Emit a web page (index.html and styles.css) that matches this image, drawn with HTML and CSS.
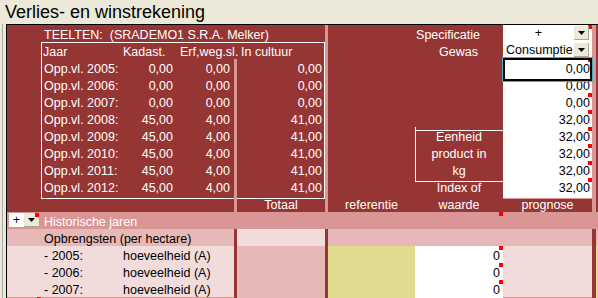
FILE: index.html
```html
<!DOCTYPE html>
<html>
<head>
<meta charset="utf-8">
<title>Verlies- en winstrekening</title>
<link rel="stylesheet" href="styles.css">
</head>
<body>
<div class="title">Verlies- en winstrekening</div>
<div class="main">
  <div class="gutter"></div>
  <div class="sheet">
    <!-- row 1 -->
    <div class="r hd">
      <div></div>
      <div class="sp5 pl3">TEELTEN: &nbsp;(SRADEMO1 S.R.A. Melker)</div>
      <div class="pk"></div>
      <div class="sp2 lab1">Specificatie</div>
      <div class="in dd mk"><span class="ddt c">+</span><span class="btn"><svg width="7" height="4" viewBox="0 0 7 4"><polygon points="0,0 7,0 3.5,4" fill="#000"/></svg></span></div>
      <div class="pk"></div>
      <div></div>
    </div>
    <!-- row 2 -->
    <div class="r hd">
      <div></div>
      <div class="bx-tl pl2">Jaar</div>
      <div class="bx-t pl3">Kadast.</div>
      <div class="bx-t pl3">Erf,weg.sl.</div>
      <div class="bx-t"></div>
      <div class="bx-tr pl4">In cultuur</div>
      <div class="pk"></div>
      <div class="sp2 lab2">Gewas</div>
      <div class="in dd"><span class="ddt pl3">Consumptie</span><span class="btn"><svg width="7" height="4" viewBox="0 0 7 4"><polygon points="0,0 7,0 3.5,4" fill="#000"/></svg></span></div>
      <div class="pk"></div>
      <div></div>
    </div>
    <!-- row 3 -->
    <div class="r hd">
      <div></div>
      <div class="bx-l pl3">Opp.vl. 2005:</div>
      <div class="n">0,00</div>
      <div class="n">0,00</div>
      <div class="pk"></div>
      <div class="bx-r n3">0,00</div>
      <div class="pk"></div>
      <div></div>
      <div></div>
      <div class="in sel mk n2">0,00</div>
      <div class="pk"></div>
      <div></div>
    </div>
    <!-- row 4 -->
    <div class="r hd">
      <div></div>
      <div class="bx-l pl3">Opp.vl. 2006:</div>
      <div class="n">0,00</div>
      <div class="n">0,00</div>
      <div class="pk"></div>
      <div class="bx-r n3">0,00</div>
      <div class="pk"></div>
      <div></div>
      <div></div>
      <div class="in mk n2">0,00</div>
      <div class="pk"></div>
      <div></div>
    </div>
    <!-- row 5 -->
    <div class="r hd">
      <div></div>
      <div class="bx-l pl3">Opp.vl. 2007:</div>
      <div class="n">0,00</div>
      <div class="n">0,00</div>
      <div class="pk"></div>
      <div class="bx-r n3">0,00</div>
      <div class="pk"></div>
      <div></div>
      <div></div>
      <div class="in mk n2">0,00</div>
      <div class="pk"></div>
      <div></div>
    </div>
    <!-- row 6 -->
    <div class="r hd">
      <div></div>
      <div class="bx-l pl3">Opp.vl. 2008:</div>
      <div class="n">45,00</div>
      <div class="n">4,00</div>
      <div class="pk"></div>
      <div class="bx-r n3">41,00</div>
      <div class="pk"></div>
      <div></div>
      <div class="eb-b"></div>
      <div class="in mk n2">32,00</div>
      <div class="pk"></div>
      <div></div>
    </div>
    <!-- row 7 -->
    <div class="r hd">
      <div></div>
      <div class="bx-l pl3">Opp.vl. 2009:</div>
      <div class="n">45,00</div>
      <div class="n">4,00</div>
      <div class="pk"></div>
      <div class="bx-r n3">41,00</div>
      <div class="pk"></div>
      <div></div>
      <div class="eb-l c">Eenheid</div>
      <div class="in mk n2">32,00</div>
      <div class="pk"></div>
      <div></div>
    </div>
    <!-- row 8 -->
    <div class="r hd">
      <div></div>
      <div class="bx-l pl3">Opp.vl. 2010:</div>
      <div class="n">45,00</div>
      <div class="n">4,00</div>
      <div class="pk"></div>
      <div class="bx-r n3">41,00</div>
      <div class="pk"></div>
      <div></div>
      <div class="eb-l c">product in</div>
      <div class="in mk n2">32,00</div>
      <div class="pk"></div>
      <div></div>
    </div>
    <!-- row 9 -->
    <div class="r hd">
      <div></div>
      <div class="bx-l pl3">Opp.vl. 2011:</div>
      <div class="n">45,00</div>
      <div class="n">4,00</div>
      <div class="pk"></div>
      <div class="bx-r n3">41,00</div>
      <div class="pk"></div>
      <div></div>
      <div class="eb-bl c">kg</div>
      <div class="in mk n2">32,00</div>
      <div class="pk"></div>
      <div></div>
    </div>
    <!-- row 10 -->
    <div class="r hd">
      <div></div>
      <div class="bx-bl pl3">Opp.vl. 2012:</div>
      <div class="bx-b n">45,00</div>
      <div class="bx-b n">4,00</div>
      <div class="pk-b"></div>
      <div class="bx-br n3">41,00</div>
      <div class="pk"></div>
      <div></div>
      <div class="c">Index of</div>
      <div class="in mk n2">32,00</div>
      <div class="pk"></div>
      <div></div>
    </div>
    <!-- row 11 -->
    <div class="r hd">
      <div class="sp4"></div>
      <div class="pk"></div>
      <div class="c">Totaal</div>
      <div class="pk"></div>
      <div class="c">referentie</div>
      <div class="c">waarde</div>
      <div class="c">prognose</div>
      <div class="pk"></div>
      <div></div>
    </div>
    <!-- row 12 -->
    <div class="r hist">
      <div class="dd2"><span class="w">+</span><span class="btn2 mk"><svg width="7" height="4" viewBox="0 0 7 4"><polygon points="0,0 7,0 3.5,4" fill="#000"/></svg></span></div>
      <div class="sp7 pl3">Historische jaren</div>
      <div class="mk"></div>
      <div class="sp3"></div>
    </div>
    <!-- row 13 -->
    <div class="r lt2">
      <div></div>
      <div class="sp3 pl3">Opbrengsten (per hectare)</div>
      <div class="dk"></div>
      <div class="lt3"></div>
      <div class="dk"></div>
      <div class="sp3"></div>
      <div class="dk"></div>
      <div></div>
    </div>
    <!-- row 14 -->
    <div class="r lt3">
      <div></div>
      <div class="pl3">- 2005:</div>
      <div class="sp2 pl3">hoeveelheid (A)</div>
      <div class="dk"></div>
      <div class="lt2"></div>
      <div class="dk"></div>
      <div class="ye"></div>
      <div class="in mk n3">0</div>
      <div></div>
      <div class="dk"></div>
      <div class="ye"></div>
    </div>
    <!-- row 15 -->
    <div class="r lt3">
      <div></div>
      <div class="pl3">- 2006:</div>
      <div class="sp2 pl3">hoeveelheid (A)</div>
      <div class="dk"></div>
      <div class="lt2"></div>
      <div class="dk"></div>
      <div class="ye"></div>
      <div class="in mk n3">0</div>
      <div></div>
      <div class="dk"></div>
      <div class="ye"></div>
    </div>
    <!-- row 16 -->
    <div class="r lt3">
      <div></div>
      <div class="pl3">- 2007:</div>
      <div class="sp2 pl3">hoeveelheid (A)</div>
      <div class="dk"></div>
      <div class="lt2"></div>
      <div class="dk"></div>
      <div class="ye"></div>
      <div class="in mk n3">0</div>
      <div></div>
      <div class="dk"></div>
      <div class="ye"></div>
    </div>
    <!-- row 17 (only its top edge is visible) -->
    <div class="r hist last">
      <div class="mk"></div>
      <div class="sp11"></div>
    </div>
  </div>
</div>
</body>
</html>
```

FILE: styles.css
```css
html, body {
  margin: 0;
  padding: 0;
  overflow: hidden;
}
body {
  width: 598px;
  height: 298px;
  background: #ECE9D8;
  font-family: "Liberation Sans", Arial, sans-serif;
  font-size: 12.5px;
  color: #000;
}
.title {
  height: 24px;
  padding-left: 5px;
  font-size: 18px;
  line-height: 24px;
}
.main {
  display: flex;
}
.gutter {
  width: 6px;
  flex: none;
  background: linear-gradient(to right, transparent 2px, #a9a9a9 2px, #a9a9a9 3px, transparent 3px);
}
.sheet {
  width: 591px;
  border-left: 1px solid #000;
  border-top: 1px solid #000;
}
.r {
  display: grid;
  grid-template-columns: 34px 79px 57px 57px 3px 88px 3px 87px 88px 89px 4px 2px;
  height: 17px;
  line-height: 21px;
  white-space: nowrap;
}
.r.last { height: 1px; }
.r > div { min-width: 0; }

.hd { background-color: #963634; color: #fff; }
.hist { background-color: #DA9694; color: #fff; }
.lt2, .r > .lt2 { background-color: #E6B9B8; }
.lt3, .r > .lt3 { background-color: #F2DCDB; }
.pk { background-color: #DA9694; }
.dk { background-color: #963634; }
.ye { background-color: #E0DB8E; }

.sp2 { grid-column: span 2; }
.sp3 { grid-column: span 3; }
.sp4 { grid-column: span 4; }
.sp5 { grid-column: span 5; }
.sp7 { grid-column: span 7; }
.sp11 { grid-column: span 11; }

.pl2 { padding-left: 2px; }
.pl3 { padding-left: 3px; }
.pl4 { padding-left: 4px; }
.c { text-align: center; }
.n { text-align: right; padding-right: 4px; }
.n2 { text-align: right; padding-right: 2px; }
.n3 { text-align: right; padding-right: 3px; }
.lab1 { text-align: right; padding-right: 23px; }
.lab2 { text-align: right; padding-right: 25px; }

/* white frame around the area table */
.bx-t { box-shadow: inset 0 1px 0 #fff; }
.bx-tl { box-shadow: inset 0 1px 0 #fff, inset 1px 0 0 #fff; }
.bx-tr { box-shadow: inset 0 1px 0 #fff, inset -1px 0 0 #fff; }
.bx-l { box-shadow: inset 1px 0 0 #fff; }
.bx-r { box-shadow: inset -1px 0 0 #fff; }
.bx-b { box-shadow: inset 0 -1px 0 #fff; }
.bx-bl { box-shadow: inset 0 -1px 0 #fff, inset 1px 0 0 #fff; }
.bx-br { box-shadow: inset 0 -1px 0 #fff, inset -1px 0 0 #fff; }
.pk-b { background-color: #DA9694; box-shadow: inset 0 -1px 0 #fff; }

/* "Eenheid product in kg" frame */
.eb-b { box-shadow: inset 0 -1px 0 #fff; }
.eb-l { box-shadow: inset 1px 0 0 #fff; }
.eb-bl { box-shadow: inset 1px 0 0 #fff, inset 0 -1px 0 #fff; }

/* input cells */
.in {
  background-color: #fff;
  color: #000;
  box-shadow: inset 0 -1px 0 #DA9694;
}
.mk {
  background-image: linear-gradient(#ff0000, #ff0000);
  background-size: 4px 4px;
  background-position: right top;
  background-repeat: no-repeat;
}
.sel {
  margin: -1px 0;
  padding-top: 1px;
  box-shadow: inset 0 0 0 2px #000, 0 0 0 1px #4BACC6;
  position: relative;
  z-index: 1;
}

/* dropdowns */
.dd {
  display: flex;
  align-items: flex-start;
  line-height: 17px;
}
.ddt {
  flex: 1;
  overflow: hidden;
}
.btn {
  flex: none;
  width: 15px;
  height: 14px;
  margin: 1px 3px 0 0;
  box-sizing: border-box;
  background-color: #ECE9D8;
  border-right: 1px solid #ACA899;
  border-bottom: 1px solid #ACA899;
  display: flex;
  align-items: center;
  justify-content: center;
}
.dd2 {
  display: flex;
  padding: 1px 1px 0 2px;
  height: 15px;
  line-height: 15px;
}
.w {
  width: 15px;
  height: 14px;
  background-color: #fff;
  color: #000;
  text-align: center;
}
.btn2 {
  width: 16px;
  height: 14px;
  box-sizing: border-box;
  background-color: #ECE9D8;
  border-right: 1px solid #ACA899;
  border-bottom: 1px solid #ACA899;
  display: flex;
  align-items: center;
  justify-content: center;
}
```
